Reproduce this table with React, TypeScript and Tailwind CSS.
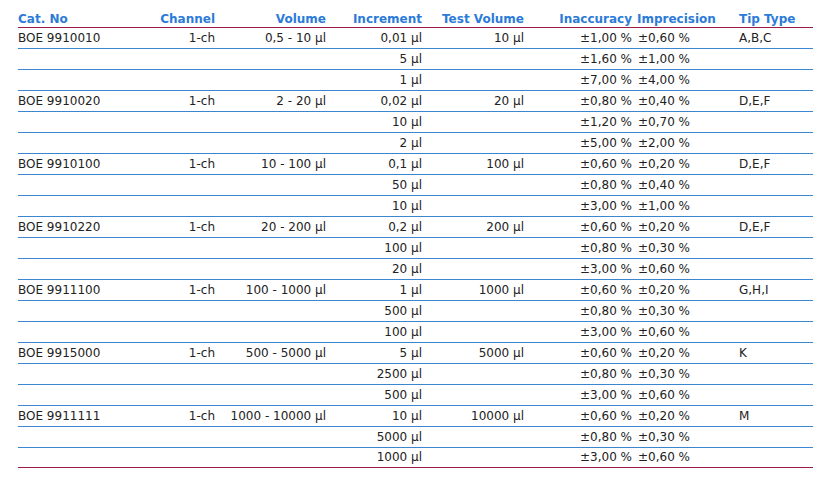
const groups = [
  { cat: 'BOE 9910010', vol: '0,5 - 10 µl', test: '10 µl', tip: 'A,B,C', rows: [['0,01 µl', '±1,00 %', '±0,60 %'], ['5 µl', '±1,60 %', '±1,00 %'], ['1 µl', '±7,00 %', '±4,00 %']] },
  { cat: 'BOE 9910020', vol: '2 - 20 µl', test: '20 µl', tip: 'D,E,F', rows: [['0,02 µl', '±0,80 %', '±0,40 %'], ['10 µl', '±1,20 %', '±0,70 %'], ['2 µl', '±5,00 %', '±2,00 %']] },
  { cat: 'BOE 9910100', vol: '10 - 100 µl', test: '100 µl', tip: 'D,E,F', rows: [['0,1 µl', '±0,60 %', '±0,20 %'], ['50 µl', '±0,80 %', '±0,40 %'], ['10 µl', '±3,00 %', '±1,00 %']] },
  { cat: 'BOE 9910220', vol: '20 - 200 µl', test: '200 µl', tip: 'D,E,F', rows: [['0,2 µl', '±0,60 %', '±0,20 %'], ['100 µl', '±0,80 %', '±0,30 %'], ['20 µl', '±3,00 %', '±0,60 %']] },
  { cat: 'BOE 9911100', vol: '100 - 1000 µl', test: '1000 µl', tip: 'G,H,I', rows: [['1 µl', '±0,60 %', '±0,20 %'], ['500 µl', '±0,80 %', '±0,30 %'], ['100 µl', '±3,00 %', '±0,60 %']] },
  { cat: 'BOE 9915000', vol: '500 - 5000 µl', test: '5000 µl', tip: 'K', rows: [['5 µl', '±0,60 %', '±0,20 %'], ['2500 µl', '±0,80 %', '±0,30 %'], ['500 µl', '±3,00 %', '±0,60 %']] },
  { cat: 'BOE 9911111', vol: '1000 - 10000 µl', test: '10000 µl', tip: 'M', rows: [['10 µl', '±0,60 %', '±0,20 %'], ['5000 µl', '±0,80 %', '±0,30 %'], ['1000 µl', '±3,00 %', '±0,60 %']] },
]

export default function App() {
  return (
    <div className="w-[840px] h-[483px] bg-white pl-[18px] pt-[7px] font-['DejaVu_Sans',Verdana,sans-serif] text-[12px] text-[#222]">
      <table className="table-fixed border-collapse w-[795px] border-b border-[#9b1a46]">
        <colgroup>
          <col className="w-[122px]" />
          <col className="w-[75px]" />
          <col className="w-[111px]" />
          <col className="w-[96px]" />
          <col className="w-[102px]" />
          <col className="w-[108px]" />
          <col className="w-[107px]" />
          <col className="w-[74px]" />
        </colgroup>
        <thead>
          <tr className="border-b border-[#9b1a46] text-[#2b7bd8] font-bold leading-[15px]">
            <th className="text-left font-bold pt-[5px] pb-0 h-[20px] whitespace-nowrap">Cat. No</th>
            <th className="text-right font-bold pt-[5px] whitespace-nowrap">Channel</th>
            <th className="text-right font-bold pt-[5px] whitespace-nowrap">Volume</th>
            <th className="text-right font-bold pt-[5px] whitespace-nowrap">Increment</th>
            <th className="text-right font-bold pt-[5px] whitespace-nowrap">Test Volume</th>
            <th className="text-right font-bold pt-[5px] whitespace-nowrap">Inaccuracy</th>
            <th className="text-left font-bold pt-[5px] pl-[5px] whitespace-nowrap">Imprecision</th>
            <th className="text-left font-bold pt-[5px] whitespace-nowrap">Tip Type</th>
          </tr>
        </thead>
        <tbody>
          {groups.map((g, gi) =>
            g.rows.map((r, ri) => {
              const last = gi === groups.length - 1 && ri === 2
              return (
                <tr key={g.cat + ri} className={last ? 'h-[20px] leading-[15px]' : 'h-[21px] leading-[15px] border-b border-[#3a86d0]'}>
                  <td className="text-left whitespace-nowrap">{ri === 0 ? g.cat : ''}</td>
                  <td className="text-right whitespace-nowrap">{ri === 0 ? '1-ch' : ''}</td>
                  <td className="text-right whitespace-nowrap">{ri === 0 ? g.vol : ''}</td>
                  <td className="text-right whitespace-nowrap">{r[0]}</td>
                  <td className="text-right whitespace-nowrap">{ri === 0 ? g.test : ''}</td>
                  <td className="text-right whitespace-nowrap">{r[1]}</td>
                  <td className="text-left pl-[6px] whitespace-nowrap">{r[2]}</td>
                  <td className="text-left whitespace-nowrap">{ri === 0 ? g.tip : ''}</td>
                </tr>
              )
            })
          )}
        </tbody>
      </table>
    </div>
  )
}
